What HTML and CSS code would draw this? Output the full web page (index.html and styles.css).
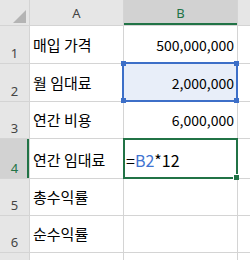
FILE: index.html
```html
<!DOCTYPE html>
<html>
<head>
<meta charset="utf-8">
<link rel="stylesheet" href="styles.css">
</head>
<body>
<div class="sheet">
  <div class="corner"><svg width="15" height="15" viewBox="0 0 15 15"><polygon points="1,14 14,1 14,14" fill="#b4b4b4"/></svg></div>
  <div class="colhead">A</div>
  <div class="colhead active-col">B</div>
  <div class="colhead"></div>

  <div class="rowhead">1</div>
  <div class="cell text">매입 가격</div>
  <div class="cell num">500,000,000</div>
  <div class="cell"></div>

  <div class="rowhead">2</div>
  <div class="cell text">월 임대료</div>
  <div class="cell num ref">2,000,000</div>
  <div class="cell"></div>

  <div class="rowhead">3</div>
  <div class="cell text">연간 비용</div>
  <div class="cell num">6,000,000</div>
  <div class="cell"></div>

  <div class="rowhead active-row">4</div>
  <div class="cell text">연간 임대료</div>
  <div class="cell formula">=<span class="refname">B2</span>*12</div>
  <div class="cell"></div>

  <div class="rowhead">5</div>
  <div class="cell text">총수익률</div>
  <div class="cell"></div>
  <div class="cell"></div>

  <div class="rowhead">6</div>
  <div class="cell text">순수익률</div>
  <div class="cell"></div>
  <div class="cell"></div>

  <div class="rowhead"></div>
  <div class="cell"></div>
  <div class="cell"></div>
  <div class="cell"></div>

  <div class="ref-box">
    <span class="h tl"></span><span class="h tr"></span><span class="h bl"></span><span class="h br"></span>
  </div>
  <div class="active-box"><span class="fill-handle"></span></div>
</div>
</body>
</html>
```
FILE: styles.css
```css
html, body {
  margin: 0;
  padding: 0;
  background: #fff;
}
.sheet {
  position: relative;
  width: 250px;
  height: 260px;
  overflow: hidden;
  display: grid;
  grid-template-columns: 29px 93px 113px 12px;
  grid-template-rows: 25px 37px 37px 36px 39px 36px 36px 7px;
  gap: 1px;
  background: #d4d4d4;
  font-family: "Noto Sans CJK KR", "Noto Sans", sans-serif;
}
.corner {
  background: #e6e6e6;
  display: flex;
  align-items: flex-end;
  justify-content: flex-end;
  padding: 0 2px 1px 0;
}
.corner svg { display: block; }
.colhead {
  background: #e6e6e6;
  display: flex;
  align-items: center;
  justify-content: center;
  font-family: "Noto Sans", sans-serif;
  font-size: 13px;
  color: #444;
}
.colhead.active-col {
  background: #d2d2d2;
  color: #217346;
  box-shadow: inset 0 -2px 0 #217346;
}
.rowhead {
  background: #e6e6e6;
  display: flex;
  align-items: flex-end;
  justify-content: center;
  font-family: "Noto Sans", sans-serif;
  font-size: 13px;
  line-height: 16px;
  color: #444;
  padding-bottom: 2px;
  box-sizing: border-box;
}
.rowhead.active-row {
  background: #d2d2d2;
  color: #217346;
  box-shadow: inset -2px 0 0 #217346;
}
.cell {
  background: #fff;
  display: flex;
  align-items: flex-end;
  font-size: 15px;
  line-height: 20px;
  color: #000;
  padding: 0 3px 8px 3px;
  box-sizing: border-box;
  white-space: nowrap;
}
.cell.num {
  justify-content: flex-end;
  font-size: 14px;
}
.cell.ref { background: #e8eef9; }
.cell.formula { font-size: 16px; padding-left: 2px; }
.refname { color: #3f74d1; }
.ref-box {
  position: absolute;
  left: 122px;
  top: 62px;
  width: 116px;
  height: 40px;
  border: 2px solid #3d6fc8;
  box-sizing: border-box;
}
.ref-box .h {
  position: absolute;
  width: 5px;
  height: 5px;
  background: #3d6fc8;
}
.ref-box .tl { left: -3px; top: -3px; }
.ref-box .tr { right: -3px; top: -3px; }
.ref-box .bl { left: -3px; bottom: -3px; }
.ref-box .br { right: -3px; bottom: -3px; }
.active-box {
  position: absolute;
  left: 123px;
  top: 138px;
  width: 115px;
  height: 41px;
  border: 2px solid #217346;
  box-sizing: border-box;
}
.fill-handle {
  position: absolute;
  right: -3px;
  bottom: -3px;
  width: 5px;
  height: 5px;
  background: #217346;
  border: 1px solid #fff;
  border-right: 0;
  border-bottom: 0;
}
```
